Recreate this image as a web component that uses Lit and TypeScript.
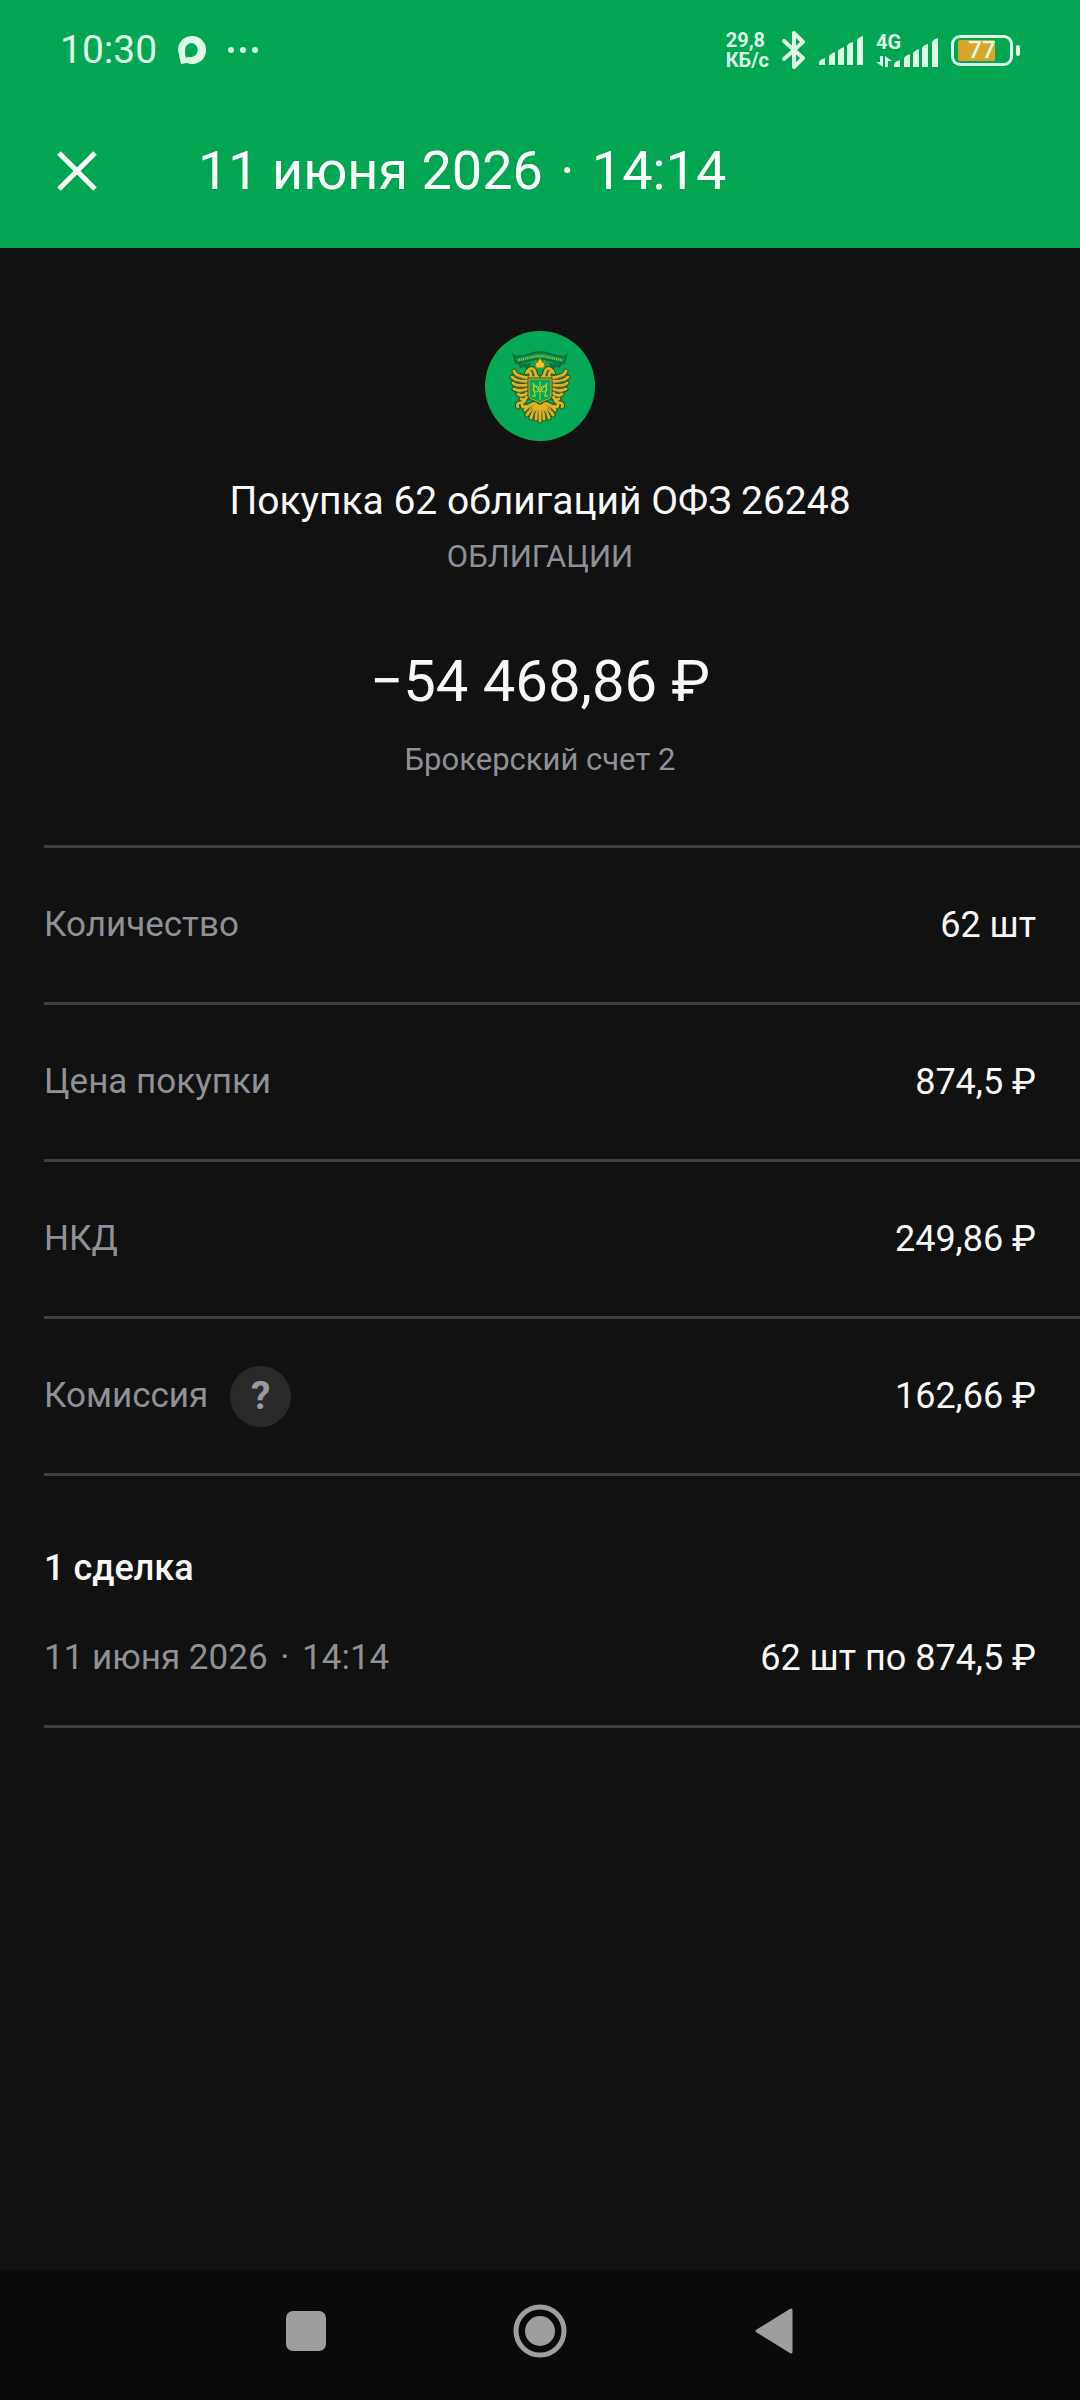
import { LitElement, html, svg, css, nothing } from 'lit';
import { customElement, property } from 'lit/decorators.js';

interface Detail {
    label: string;
    value: string;
    hint?: boolean;
}

const details: Detail[] = [
    { label: 'Количество', value: '62 шт' },
    { label: 'Цена покупки', value: '874,5 ₽' },
    { label: 'НКД', value: '249,86 ₽' },
    { label: 'Комиссия', value: '162,66 ₽', hint: true },
];

// Left half of the eagle, the right half is mirrored
const halfEagle = svg`
    <path d="M52 46 C47 48 42 47 38 46 C33 45 30 43 29 40" />
    <path d="M43 50 C36 51 31 50 27 46" />
    <path d="M42 54 C36 55 31 55 28 52" />
    <path d="M42 58 C38 60 33 60 29 58" />
    <path d="M42 62 C39 65 35 65 33 63" />
    <path d="M42 66 C40 69 38 69 36 68" />
    <path d="M53 46 C49 45 52 41 48 38 C46 37 43 38 42 41 C45 40 46 42 46 45" />
    <path d="M40 69 C39 73 36 71 34 72 C32 73 32 75 33 76 M37 73 C37 76 39 77 41 75" />
    <path d="M51 72 C47 73 43 74 40 79" />
    <path d="M52 74 C47 76 44 80 42 84" />
    <path d="M53 75 C49 79 47 83 46 87" />
    <path d="M54 76 C52 81 51 85 51 88" />
`;

/**
 * Round issuer badge with the two-headed eagle emblem.
 *
 * @element issuer-emblem
 */
@customElement('issuer-emblem')
export class IssuerEmblem extends LitElement {
    static styles = css`
        :host {
            display: block;
            width: 110px;
            height: 110px;
        }
        svg {
            display: block;
            width: 100%;
            height: 100%;
        }
        .outline {
            fill: none;
            stroke: #20582a;
            stroke-width: 5;
            stroke-linecap: round;
        }
        .gold {
            fill: none;
            stroke: #dfb321;
            stroke-width: 3;
            stroke-linecap: round;
        }
        .feathers {
            fill: none;
            stroke: #8a741c;
            stroke-width: 1;
            stroke-linecap: round;
        }
    `;

    _eagle(name: string) {
        return svg`
            <g class="${name}">
                ${halfEagle}
                <g transform="translate(110 0) scale(-1 1)">${halfEagle}</g>
                <path d="M55 72 V90" />
            </g>
        `;
    }

    render() {
        const feathers = svg`
            <path d="M40 48 L30 45 M40 52 L30 50 M40 56 L31 56 M41 60 L33 62 M47 77 L43 80 M50 80 L48 84 M53 80 V86" />
        `;
        return html`
            <svg viewBox="0 0 110 110" role="img" aria-label="ОФЗ">
                <circle cx="55" cy="55" r="55" fill="#04a857" />
                ${this._eagle('outline')} ${this._eagle('gold')}
                <g class="feathers">
                    ${feathers}
                    <g transform="translate(110 0) scale(-1 1)">${feathers}</g>
                </g>
                <path
                    d="M33 31 L36 36 L39 34 L42 37 L45 32 M77 31 L74 36 L71 34 L68 37 L65 32"
                    fill="#0a8a48"
                    stroke="#146b35"
                    stroke-width="2"
                />
                <path
                    d="M29 25 C31 27 33 26 35 25 C41 25 48 21 55 21 C62 21 69 25 75 25 C77 26 79 27 81 25 L79 32 C71 32 65 28 55 28 C45 28 39 32 31 32 Z"
                    fill="#0c9a50"
                    stroke="#146b35"
                    stroke-width="2"
                />
                <path
                    d="M34 29 C42 28 48 25 55 25 C62 25 68 28 76 29"
                    fill="none"
                    stroke="#a9c63a"
                    stroke-width="2"
                    stroke-dasharray="1 1"
                />
                <path d="M50 29 L52 32 L55 27 L58 32 L60 29 L59 37 H51 Z" fill="#f4c81c" stroke="#8a7a16" />
                <path
                    d="M44 48 H66 V65 C66 69 60 68 55 72 C50 68 44 69 44 65 Z"
                    fill="#04a857"
                    stroke="#20582a"
                    stroke-width="3"
                />
                <path
                    d="M44 48 H66 V65 C66 69 60 68 55 72 C50 68 44 69 44 65 Z"
                    fill="#04a857"
                    stroke="#d9b420"
                />
                <path
                    d="M48 52 L50 65 M62 52 L60 65 M48 52 L55 61 L62 52 M55 50 V69 M47 65 H51 M59 65 H63"
                    fill="none"
                    stroke="#c3cb2e"
                />
                <circle cx="51" cy="58" r="3" fill="none" stroke="#c3cb2e" />
                <circle cx="59" cy="58" r="3" fill="none" stroke="#c3cb2e" />
            </svg>
        `;
    }
}

/**
 * Phone status bar: clock and notifications on the left, radios and battery
 * on the right.
 *
 * @element status-bar
 */
@customElement('status-bar')
export class StatusBar extends LitElement {
    @property({ type: String }) time = '';
    @property({ type: Number }) battery = 0;

    static styles = css`
        :host {
            display: flex;
            justify-content: space-between;
            align-items: center;
            padding: 6px 60px 0;
            height: 88px;
            color: #dcfbe9;
        }
        svg {
            display: block;
            fill: currentColor;
        }
        .side {
            display: flex;
            align-items: center;
        }
        .left {
            gap: 21px;
        }
        .right {
            gap: 13px;
        }
        .time {
            font-size: 39px;
            line-height: 44px;
        }
        .speed {
            display: flex;
            flex-direction: column;
            font-size: 20px;
            font-weight: 700;
            line-height: 20px;
        }
        .mobile {
            display: grid;
        }
        .mobile > * {
            grid-area: 1 / 1;
        }
        .network {
            font-size: 20px;
            font-weight: 700;
            line-height: 16px;
        }
        .battery {
            display: flex;
            align-items: center;
            gap: 3px;
        }
        .case {
            box-sizing: border-box;
            display: grid;
            width: 62px;
            height: 31px;
            padding: 2px 4px;
            border: 3px solid currentColor;
            border-radius: 9px;
        }
        .charge,
        .percent {
            grid-area: 1 / 1;
        }
        .charge {
            border-radius: 2px;
            background: #dba52b;
        }
        .percent {
            font-size: 24px;
            font-weight: 500;
            line-height: 21px;
            text-align: center;
        }
        .nub {
            width: 4px;
            height: 11px;
            border-radius: 2px;
            background: currentColor;
        }
    `;

    _bars() {
        return svg`
            <path d="M0 29 V27 Q0 24 6 22 V29 Z" />
            <path d="M10 29 V20 Q11 18 16 16 V29 Z" />
            <path d="M19 29 V15 Q20 13 25 11 V29 Z" />
            <path d="M28 29 V10 Q29 7 34 6 V29 Z" />
            <path d="M38 29 V5 Q38 2 44 0 V29 Z" />
        `;
    }

    render() {
        return html`
            <div class="side left">
                <span class="time">${this.time}</span>
                <svg width="28" height="28" viewBox="0 0 28 28">
                    <path
                        fill-rule="evenodd"
                        d="M14 0 A14 14 0 1 1 9 27 L3 28 Q0 14 0 14 A14 14 0 0 1 14 0 Z M14 7 A7 7 0 0 0 7 14 Q7 22 9 22 Q9 20 11 21 A7 7 0 1 0 14 7 Z"
                    />
                </svg>
                <svg class="more" width="32" height="8" viewBox="0 0 32 8">
                    <circle cx="4" cy="4" r="3" />
                    <circle cx="16" cy="4" r="3" />
                    <circle cx="28" cy="4" r="3" />
                </svg>
            </div>
            <div class="side right">
                <span class="speed"><span>29,8</span><span>КБ/с</span></span>
                <svg width="24" height="38" viewBox="0 0 24 38">
                    <path
                        d="M2 10 L21 27 L12 36 V2 L21 11 L2 28"
                        fill="none"
                        stroke="currentColor"
                        stroke-width="4"
                        stroke-linecap="round"
                        stroke-linejoin="round"
                    />
                </svg>
                <svg width="44" height="29" viewBox="0 0 44 29">${this._bars()}</svg>
                <span class="mobile">
                    <span class="network">4G</span>
                    <svg width="62" height="33" viewBox="0 0 62 33">
                        <g transform="translate(18 4)">${this._bars()}</g>
                        <path d="M4 22 h3 v11 L0 28 h4 Z M9 22 L16 27 h-4 v6 h-3 Z" />
                    </svg>
                </span>
                <span class="battery">
                    <span class="case">
                        <span class="charge" style="width: ${this.battery}%"></span>
                        <span class="percent">${this.battery}</span>
                    </span>
                    <span class="nub"></span>
                </span>
            </div>
        `;
    }
}

@customElement('app-root')
export class AppRoot extends LitElement {
    static styles = css`
        :host {
            display: flex;
            flex-direction: column;
            min-height: 100vh;
            background: #111111;
            color: #f8f8f8;
            font-family: Roboto, 'Liberation Sans', sans-serif;
            font-size: 36px;
            line-height: 48px;
        }
        button {
            display: grid;
            place-items: center;
            padding: 0;
            border: 0;
            background: none;
            color: inherit;
            font: inherit;
            cursor: pointer;
        }
        h1,
        h2,
        p,
        dl,
        dd {
            margin: 0;
            font-weight: 400;
        }
        svg {
            display: block;
        }
        .header {
            background: #02a652;
            color: #ffffff;
        }
        .toolbar {
            display: flex;
            align-items: center;
            gap: 68px;
            height: 154px;
            padding: 0 24px;
        }
        .close {
            width: 106px;
            height: 106px;
        }
        .title {
            font-size: 54px;
            line-height: 64px;
        }
        .dot {
            padding: 0 4px;
        }
        .summary {
            display: flex;
            flex-direction: column;
            align-items: center;
            padding: 83px 44px 65px;
            text-align: center;
        }
        .name {
            margin-top: 36px;
            font-size: 39px;
            line-height: 48px;
        }
        .kind,
        .account {
            font-size: 31px;
            line-height: 40px;
            color: #909097;
        }
        .kind {
            margin-top: 12px;
        }
        .amount {
            margin-top: 72px;
            font-size: 58px;
            line-height: 64px;
        }
        .account {
            margin-top: 27px;
        }
        .details {
            margin-left: 44px;
            border-top: 3px solid #3f3f3f;
        }
        .row {
            display: flex;
            align-items: center;
            justify-content: space-between;
            padding-right: 44px;
        }
        .details .row {
            height: 154px;
            border-bottom: 3px solid #3f3f3f;
        }
        .label {
            display: flex;
            align-items: center;
            gap: 22px;
            font-size: 35px;
            color: #909097;
        }
        .hint {
            width: 61px;
            height: 61px;
            border-radius: 50%;
            background: #2a2a2b;
            color: #9a9aa3;
            font-size: 39px;
            font-weight: 700;
        }
        .deals {
            margin-left: 44px;
            padding: 68px 0 43px;
            border-bottom: 3px solid #3f3f3f;
        }
        .deals-title {
            margin-bottom: 42px;
            font-size: 36px;
            font-weight: 500;
            line-height: 48px;
        }
        .navigation {
            display: flex;
            justify-content: center;
            height: 130px;
            margin-top: auto;
            background: #0a0a0a;
            color: #9e9e9e;
        }
        .navigation button {
            width: 234px;
            padding-bottom: 8px;
        }
    `;

    _renderMoment() {
        return html`<time datetime="2026-06-11T14:14">11 июня 2026 <span class="dot">·</span> 14:14</time>`;
    }

    _renderDetail(detail: Detail) {
        return html`
            <div class="row">
                <dt class="label">
                    ${detail.label}
                    ${detail.hint ? html`<button class="hint" aria-label="Подробнее">?</button>` : nothing}
                </dt>
                <dd>${detail.value}</dd>
            </div>
        `;
    }

    render() {
        return html`
            <header class="header">
                <status-bar time="10:30" battery="77"></status-bar>
                <div class="toolbar">
                    <button class="close" aria-label="Закрыть">
                        <svg width="40" height="40" viewBox="0 0 40 40">
                            <path d="M2 2 L38 38 M38 2 L2 38" stroke="currentColor" stroke-width="5" />
                        </svg>
                    </button>
                    <h1 class="title">${this._renderMoment()}</h1>
                </div>
            </header>
            <section class="summary">
                <issuer-emblem></issuer-emblem>
                <h2 class="name">Покупка 62 облигаций ОФЗ 26248</h2>
                <p class="kind">ОБЛИГАЦИИ</p>
                <p class="amount">−54 468,86 ₽</p>
                <p class="account">Брокерский счет 2</p>
            </section>
            <dl class="details">${details.map((detail) => this._renderDetail(detail))}</dl>
            <section class="deals">
                <h2 class="deals-title">1 сделка</h2>
                <div class="row">
                    <span class="label">${this._renderMoment()}</span>
                    <span>62 шт по 874,5 ₽</span>
                </div>
            </section>
            <nav class="navigation">
                <button aria-label="Недавние">
                    <svg width="40" height="40" viewBox="0 0 40 40">
                        <rect width="40" height="40" rx="7" fill="currentColor" />
                    </svg>
                </button>
                <button aria-label="Домой">
                    <svg width="54" height="54" viewBox="0 0 54 54">
                        <circle cx="27" cy="27" r="24" fill="none" stroke="currentColor" stroke-width="5" />
                        <circle cx="27" cy="27" r="15" fill="currentColor" />
                    </svg>
                </button>
                <button aria-label="Назад">
                    <svg width="38" height="46" viewBox="0 0 38 46">
                        <path
                            d="M2 23 L36 2 V44 Z"
                            fill="currentColor"
                            stroke="currentColor"
                            stroke-width="3"
                            stroke-linejoin="round"
                        />
                    </svg>
                </button>
            </nav>
        `;
    }
}
